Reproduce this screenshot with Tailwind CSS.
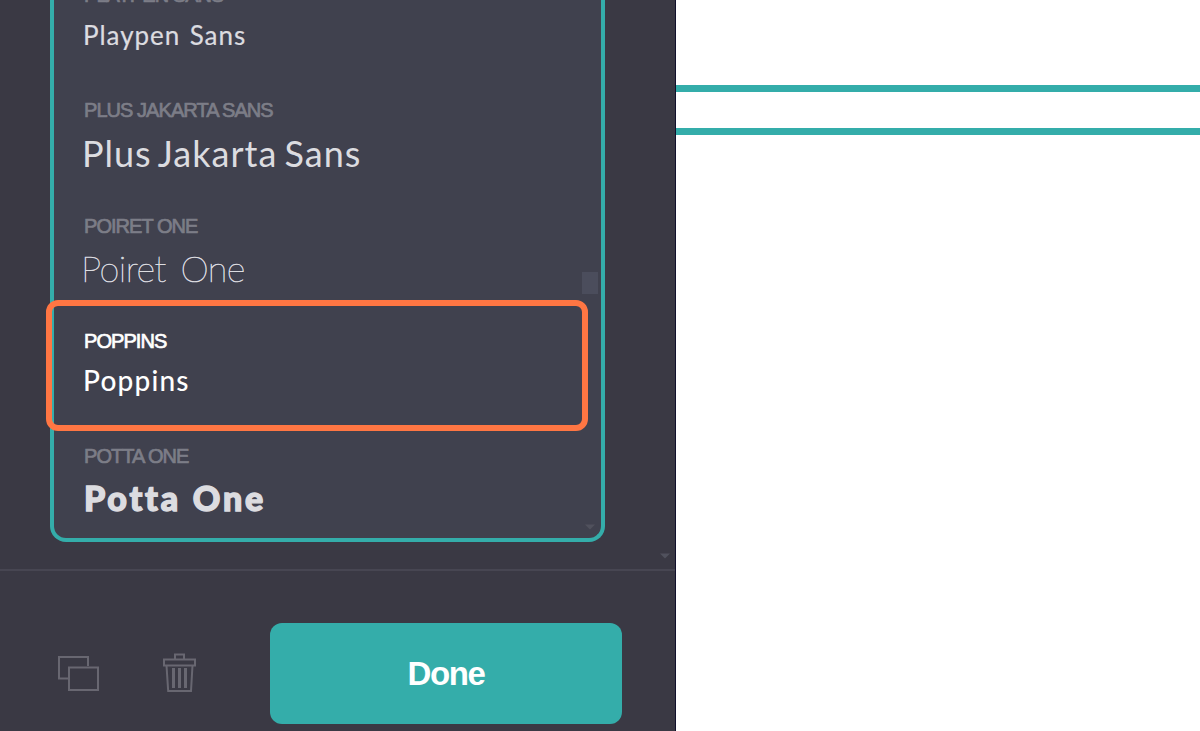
<!DOCTYPE html>
<html lang="en">
<head>
  <meta charset="UTF-8" />
  <meta name="viewport" content="width=device-width, initial-scale=1.0" />
  <title>Font Picker</title>
  <script src="https://cdn.jsdelivr.net/npm/@tailwindcss/browser@4"></script>
</head>
<body class="flex h-screen overflow-hidden bg-white font-['Liberation_Sans',Arial,sans-serif]">
  <!-- Settings panel -->
  <aside class="relative flex h-full w-[676px] shrink-0 flex-col border-r border-[#11102c] bg-[#3a3944]">
    <div class="h-[569px] shrink-0 pl-[50px]">
      <!-- Font list -->
      <div class="relative h-[542px] w-[555px] overflow-hidden rounded-b-[16px] border-4 border-t-0 border-[#34adaa] bg-[#40414e] pl-[30px]">
        <ul class="-mt-[15px] whitespace-nowrap text-[#dcdce0]">
          <li class="h-[115.3px]">
            <div class="h-5 text-[20px] leading-5 tracking-[-0.95px] text-[#7c7d87] [-webkit-text-stroke:0.7px]">PLAYPEN SANS</div>
            <div class="-ml-px font-['Lato',sans-serif] text-[26px] leading-[60px] tracking-[0.95px] [word-spacing:2px] [-webkit-text-stroke:0.2px]">Playpen Sans</div>
          </li>
          <li class="h-[115.3px]">
            <div class="h-5 text-[20px] leading-5 tracking-[-0.95px] text-[#7c7d87] [-webkit-text-stroke:0.7px]">PLUS JAKARTA SANS</div>
            <div class="-ml-0.5 font-['Lato',sans-serif] text-[36px] leading-[66px] tracking-[1px] [word-spacing:-3px]">Plus Jakarta Sans</div>
          </li>
          <li class="h-[115.3px]">
            <div class="h-5 text-[20px] leading-5 tracking-[-0.95px] text-[#7c7d87] [-webkit-text-stroke:0.7px]">POIRET ONE</div>
            <div class="-ml-[3px] font-['Lato',sans-serif] text-[36px] leading-[64px] font-thin tracking-[-0.5px] [word-spacing:5px] [-webkit-text-stroke:0.6px]">Poiret One</div>
          </li>
          <li class="h-[115.3px] text-white">
            <div class="h-5 text-[20px] leading-5 tracking-[-0.95px] [-webkit-text-stroke:0.7px]">POPPINS</div>
            <div class="-ml-px font-['Lato',sans-serif] text-[28px] leading-[59px] font-medium tracking-[1.2px]">Poppins</div>
          </li>
          <li class="h-[115.3px]">
            <div class="h-5 text-[20px] leading-5 tracking-[-0.95px] text-[#7c7d87] [-webkit-text-stroke:0.7px]">POTTA ONE</div>
            <div class="font-['Lato',sans-serif] text-[34px] leading-[64px] font-black tracking-[2.8px] [word-spacing:1px] [-webkit-text-stroke:1.4px]">Potta One</div>
          </li>
        </ul>
        <!-- scrollbar thumb and arrow -->
        <div class="absolute top-[272px] right-[3px] h-[22px] w-4 bg-[#4b4d5c]"></div>
        <svg class="absolute right-[5px] bottom-[8px] h-[6px] w-[12px]" viewBox="0 0 12 6"><path d="M1 0.5h10L6 5.500z" fill="#50515d" /></svg>
      </div>
    </div>
    <svg class="absolute top-[553px] left-[659px] h-[6px] w-[12px]" viewBox="0 0 12 6"><path d="M1 0.5h10L6 5.500z" fill="#50515d" /></svg>

    <!-- Footer -->
    <div class="flex grow border-t-2 border-[#474652] pl-[57px]">
      <svg class="mt-[84px] h-[37px] w-[43px]" viewBox="0 0 43 37" fill="none" stroke="#686771" stroke-width="2">
        <path d="M11 23.5H2V2h29v9" />
        <path d="M12 12.5h29V35H12z" />
      </svg>
      <svg class="mt-[81px] ml-[62px] h-[42px] w-[35px]" viewBox="0 0 35 42" fill="none" stroke="#686771" stroke-width="2">
        <path d="M2 7.5h31v6H2z" />
        <path d="M13 7.5V2.5h9v5" />
        <path d="M4.5 13.5l1.700 25.500h22.800l1.500-25.500" />
        <path d="M11.5 16v20M17.5 16v20M23.5 16v20" stroke-width="3" />
      </svg>
      <button class="mt-[52px] ml-[73px] h-[101px] w-[352px] rounded-[12px] bg-[#34adaa] text-[33px] font-bold tracking-[-1.4px] text-white">Done</button>
    </div>

    <!-- Highlight around the chosen font -->
    <div class="absolute top-[300px] left-[46px] h-[131px] w-[542px] rounded-[12px] border-6 border-[#ff7643]"></div>
  </aside>

  <!-- Canvas -->
  <main class="grow pt-[85px]">
    <div class="h-[50px] border-y-7 border-[#34adaa]"></div>
  </main>
</body>
</html>
